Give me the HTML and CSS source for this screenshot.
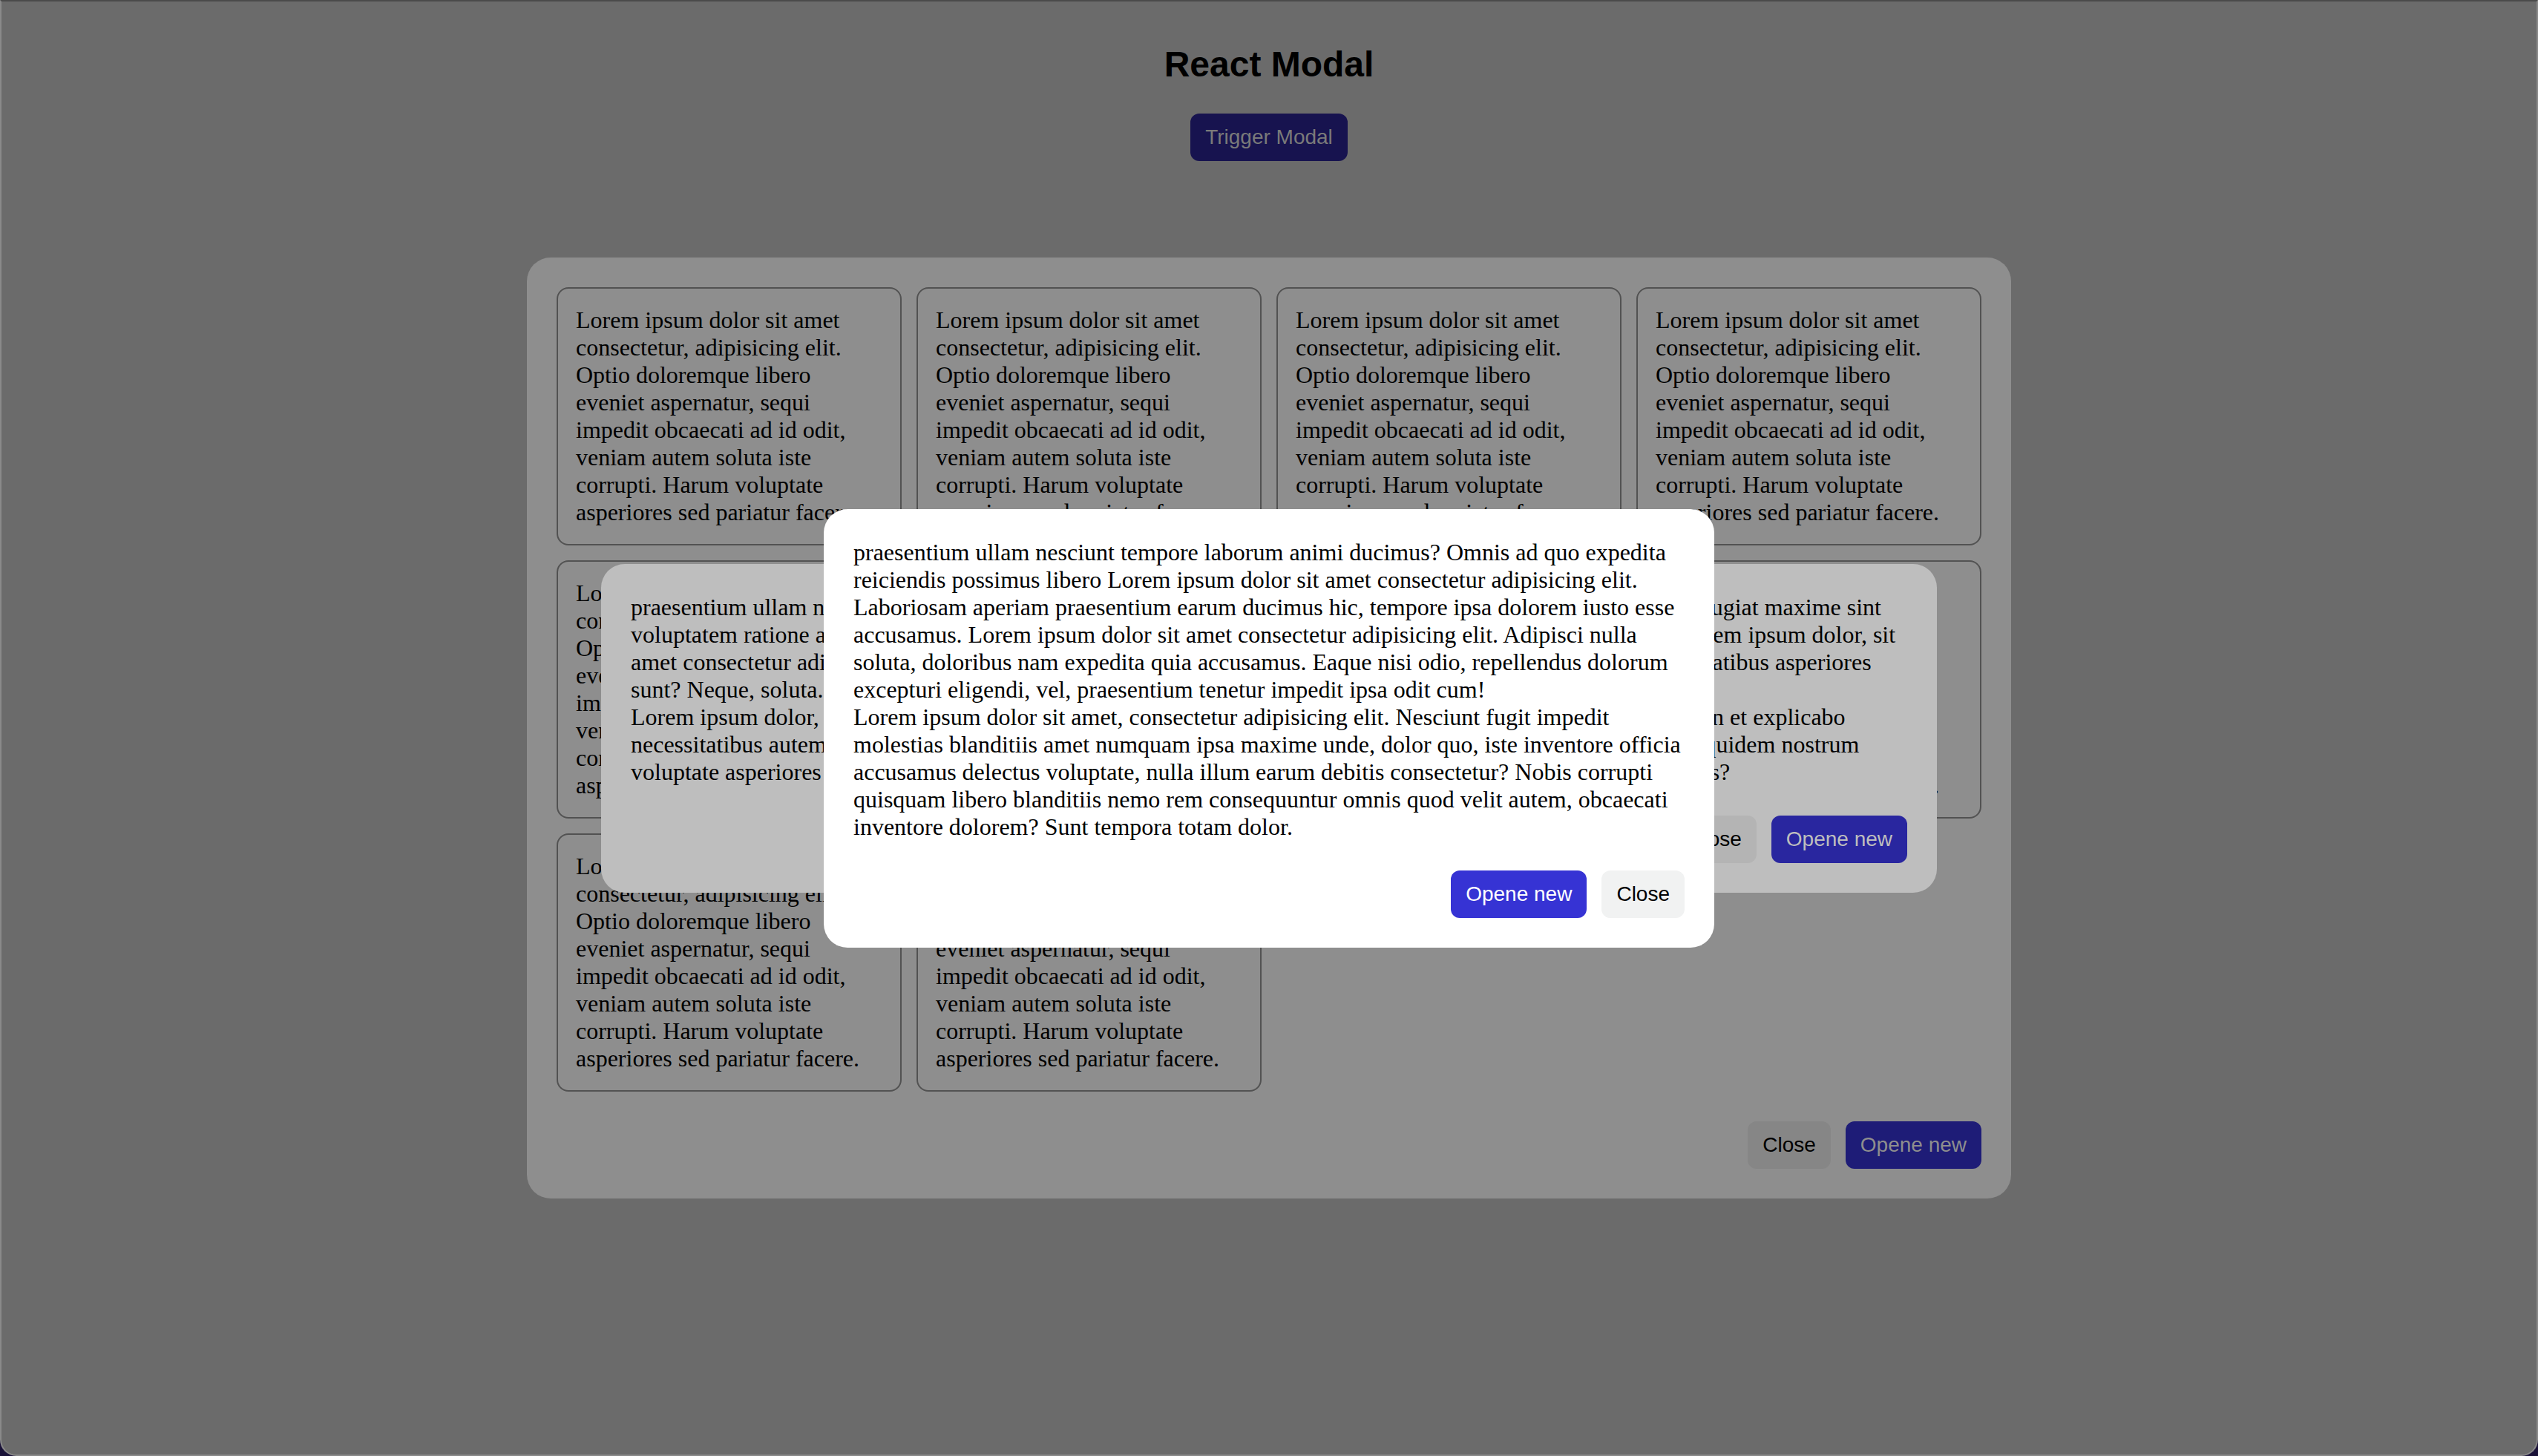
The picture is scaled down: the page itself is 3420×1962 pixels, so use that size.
FILE: index.html
```html
<!DOCTYPE html>
<html lang="en">
<head>
<meta charset="utf-8">
<title>React Modal</title>
<link rel="stylesheet" href="styles.css">
</head>
<body>
  <main class="app">
    <h1 class="title">React Modal</h1>
    <button class="btn btn-trigger">Trigger Modal</button>
  </main>

  <div class="layer">
    <section class="modal modal-1">
      <div class="card-grid">
        <div class="card">Lorem ipsum dolor sit amet consectetur, adipisicing elit. Optio doloremque libero eveniet aspernatur, sequi impedit obcaecati ad id odit, veniam autem soluta iste corrupti. Harum voluptate asperiores sed pariatur facere.</div>
        <div class="card">Lorem ipsum dolor sit amet consectetur, adipisicing elit. Optio doloremque libero eveniet aspernatur, sequi impedit obcaecati ad id odit, veniam autem soluta iste corrupti. Harum voluptate asperiores sed pariatur facere.</div>
        <div class="card">Lorem ipsum dolor sit amet consectetur, adipisicing elit. Optio doloremque libero eveniet aspernatur, sequi impedit obcaecati ad id odit, veniam autem soluta iste corrupti. Harum voluptate asperiores sed pariatur facere.</div>
        <div class="card">Lorem ipsum dolor sit amet consectetur, adipisicing elit. Optio doloremque libero eveniet aspernatur, sequi impedit obcaecati ad id odit, veniam autem soluta iste corrupti. Harum voluptate asperiores sed pariatur facere.</div>
        <div class="card">Lorem ipsum dolor sit amet consectetur, adipisicing elit. Optio doloremque libero eveniet aspernatur, sequi impedit obcaecati ad id odit, veniam autem soluta iste corrupti. Harum voluptate asperiores sed pariatur facere.</div>
        <div class="card">Lorem ipsum dolor sit amet consectetur, adipisicing elit. Optio doloremque libero eveniet aspernatur, sequi impedit obcaecati ad id odit, veniam autem soluta iste corrupti. Harum voluptate asperiores sed pariatur facere.</div>
        <div class="card">Lorem ipsum dolor sit amet consectetur, adipisicing elit. Optio doloremque libero eveniet aspernatur, sequi impedit obcaecati ad id odit, veniam autem soluta iste corrupti. Harum voluptate asperiores sed pariatur facere.</div>
        <div class="card">Lorem ipsum dolor sit amet consectetur, adipisicing elit. Optio doloremque libero eveniet aspernatur, sequi impedit obcaecati ad id odit, veniam autem soluta iste corrupti. Harum voluptate asperiores sed pariatur facere.</div>
        <div class="card">Lorem ipsum dolor sit amet consectetur, adipisicing elit. Optio doloremque libero eveniet aspernatur, sequi impedit obcaecati ad id odit, veniam autem soluta iste corrupti. Harum voluptate asperiores sed pariatur facere.</div>
        <div class="card">Lorem ipsum dolor sit amet consectetur, adipisicing elit. Optio doloremque libero eveniet aspernatur, sequi impedit obcaecati ad id odit, veniam autem soluta iste corrupti. Harum voluptate asperiores sed pariatur facere.</div>
      </div>
      <div class="modal-footer">
        <button class="btn btn-close">Close</button>
        <button class="btn btn-open">Opene new</button>
      </div>
    </section>
  </div>

  <div class="layer">
    <section class="modal modal-2">
      <div class="modal-body">
        <p>praesentium ullam nesciunt tempore laborum animi ducimus? Omnis ad quo expedita reiciendis possimus libero fugiat maxime sint voluptatem ratione aperiam earum ducimus hic, tempore ipsa dolorem iusto esse accusamus. Adipisci nulla id Lorem ipsum dolor, sit amet consectetur adipisicing elit. Dolorum quisquam, laudantium eos doloribus nam expedita quia nobis et voluptatibus asperiores sunt? Neque, soluta.</p>
        <p>Lorem ipsum dolor, sit amet consectetur adipisicing elit. Quas repellendus illum, debitis rem omnis velit ullam non et explicabo necessitatibus autem tempora totam dolor, quisquam libero blanditiis nemo rem consequuntur omnis quod ullam quidem nostrum voluptate asperiores sed pariatur facere, dolorem ullam esse accusamus eaque odio, repellendus dolorum possimus?</p>
      </div>
      <div class="modal-footer">
        <button class="btn btn-close">Close</button>
        <button class="btn btn-open">Opene new</button>
      </div>
    </section>
  </div>

  <div class="layer">
    <section class="modal modal-3">
      <div class="modal-body">
        <p>praesentium ullam nesciunt tempore laborum animi ducimus? Omnis ad quo expedita reiciendis possimus libero Lorem ipsum dolor sit amet consectetur adipisicing elit. Laboriosam aperiam praesentium earum ducimus hic, tempore ipsa dolorem iusto esse accusamus. Lorem ipsum dolor sit amet consectetur adipisicing elit. Adipisci nulla soluta, doloribus nam expedita quia accusamus. Eaque nisi odio, repellendus dolorum excepturi eligendi, vel, praesentium tenetur impedit ipsa odit cum!</p>
        <p>Lorem ipsum dolor sit amet, consectetur adipisicing elit. Nesciunt fugit impedit molestias blanditiis amet numquam ipsa maxime unde, dolor quo, iste inventore officia accusamus delectus voluptate, nulla illum earum debitis consectetur? Nobis corrupti quisquam libero blanditiis nemo rem consequuntur omnis quod velit autem, obcaecati inventore dolorem? Sunt tempora totam dolor.</p>
      </div>
      <div class="modal-footer">
        <button class="btn btn-open">Opene new</button>
        <button class="btn btn-close">Close</button>
      </div>
    </section>
  </div>
</body>
</html>
```

FILE: styles.css
```css
* {
  box-sizing: border-box;
}

html {
  background: #1a1238;
}

body {
  margin: 0;
  height: 100vh;
  overflow: hidden;
  background: #6b6b6b;
  border: 2px solid #8a8a8a;
  border-top-color: #4a4a4a;
  border-radius: 0 0 22px 22px;
  font-family: "Liberation Serif", "Times New Roman", serif;
}

.app {
  display: flex;
  flex-direction: column;
  align-items: center;
  padding-top: 57px;
}

.title {
  margin: 0 0 39px;
  font-family: "Liberation Sans", Arial, sans-serif;
  font-size: 48px;
  font-weight: 700;
  line-height: normal;
  color: #000;
}

.btn {
  border: none;
  border-radius: 12px;
  padding: 16px 20px;
  font-family: "Liberation Sans", Arial, sans-serif;
  font-size: 28px;
  line-height: normal;
  cursor: pointer;
}

.btn-trigger {
  background: #17134f;
  color: #7a7a7a;
}

.layer {
  position: fixed;
  inset: 0;
  display: flex;
  align-items: center;
  justify-content: center;
}

.modal {
  padding: 40px;
  border-radius: 32px;
  color: #000;
  font-size: 32px;
  line-height: normal;
}

.modal-1 {
  width: 2000px;
  background: #8e8e8e;
}

.modal-2 {
  width: 1800px;
  background: #bebebe;
}

.modal-3 {
  width: 1200px;
  background: #ffffff;
}

.card-grid {
  display: grid;
  grid-template-columns: repeat(4, 1fr);
  gap: 20px;
}

.card {
  border: 2px solid #525252;
  border-radius: 16px;
  padding: 24px;
}

.modal-body p {
  margin: 0;
}

.modal-footer {
  display: flex;
  justify-content: flex-end;
  gap: 20px;
  margin-top: 40px;
}

.modal-3 .btn-open {
  background: #3633d4;
  color: #ffffff;
}

.modal-3 .btn-close {
  background: #f1f2f2;
  color: #000;
}

.modal-2 .btn-open {
  background: #29269f;
  color: #bebebe;
}

.modal-2 .btn-close {
  background: #b4b4b4;
  color: #000;
}

.modal-1 .btn-open {
  background: #1e1c77;
  color: #8e8e8e;
}

.modal-1 .btn-close {
  background: #868686;
  color: #000;
}
```
